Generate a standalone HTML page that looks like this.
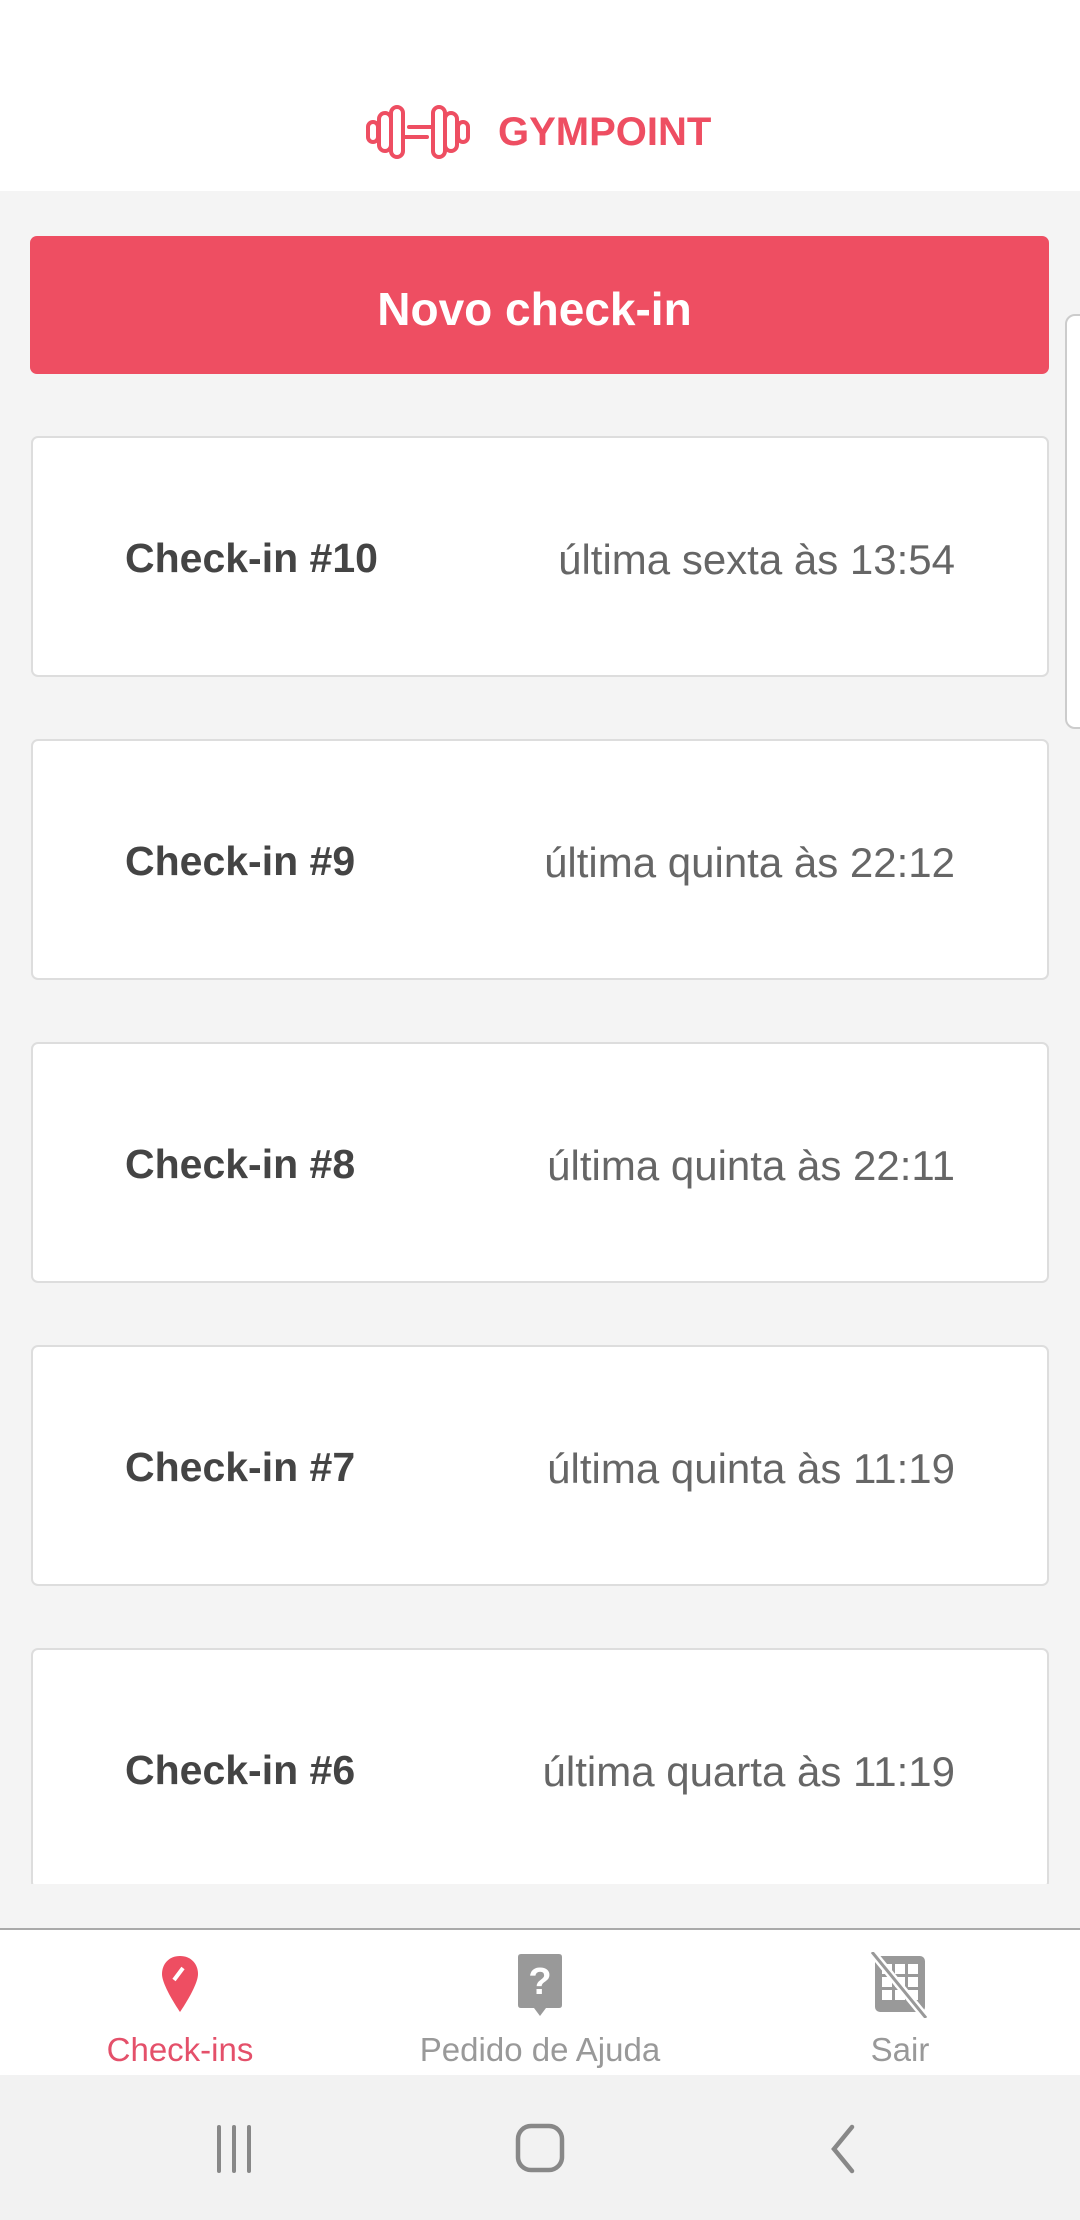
<!DOCTYPE html>
<html><head><meta charset="utf-8"><style>
*{margin:0;padding:0;box-sizing:border-box}
body{width:1080px;height:2220px;background:#f4f4f4;font-family:"Liberation Sans",Roboto,sans-serif;position:relative;overflow:hidden}
.hdr{position:absolute;left:0;top:0;width:1080px;height:191px;background:#fff}
.logo{position:absolute;left:498px;top:110px;font-size:40px;font-weight:bold;color:#ee4e62;letter-spacing:0}
.btn{position:absolute;left:30px;top:236px;width:1019px;height:138px;background:#ee4e62;border-radius:7px;color:#fff;font-size:46px;font-weight:bold;text-align:center;line-height:146px;text-indent:-10px}
.card{position:absolute;left:31px;width:1018px;height:241px;background:#fff;border:2px solid #ddd;border-radius:7px}
.card .t{position:absolute;left:92px;top:97px;font-size:41px;font-weight:bold;color:#444}
.card .d{position:absolute;right:92px;top:98px;font-size:42px;color:#666}
.clip{position:absolute;left:0;top:0;width:1080px;height:1884px;overflow:hidden}
.nav{position:absolute;left:0;top:1928px;width:1080px;height:147px;background:#fff;border-top:2px solid #aaa}
.lab{position:absolute;top:101px;font-size:33px;width:360px;text-align:center;color:#999}
.sys{position:absolute;left:0;top:2075px;width:1080px;height:145px;background:#f2f2f2}
</style></head><body>
<div class="hdr">
<svg style="position:absolute;left:365px;top:104px" width="106" height="56" viewBox="0 0 106 56" fill="none" stroke="#ee4e62" stroke-width="4" stroke-linecap="round">
<rect x="3" y="18" width="10" height="20" rx="5"/><rect x="14" y="9" width="12" height="38" rx="6"/><rect x="26" y="3" width="12" height="50" rx="6"/>
<rect x="68" y="3" width="12" height="50" rx="6"/><rect x="80" y="9" width="12" height="38" rx="6"/><rect x="93" y="18" width="10" height="20" rx="5"/>
<line x1="44" y1="23" x2="66" y2="23"/><line x1="40" y1="33" x2="62" y2="33"/></svg>
<div class="logo">GYMPOINT</div></div>
<div class="clip">
<div class="btn">Novo check-in</div>
<div class="card" style="top:436px"><div class="t">Check-in #10</div><div class="d">última sexta às 13:54</div></div>
<div class="card" style="top:739px"><div class="t">Check-in #9</div><div class="d">última quinta às 22:12</div></div>
<div class="card" style="top:1042px"><div class="t">Check-in #8</div><div class="d">última quinta às 22:11</div></div>
<div class="card" style="top:1345px"><div class="t">Check-in #7</div><div class="d">última quinta às 11:19</div></div>
<div class="card" style="top:1648px"><div class="t">Check-in #6</div><div class="d">última quarta às 11:19</div></div>
<div style="position:absolute;left:1065px;top:314px;width:30px;height:415px;border:2px solid #ccc;border-radius:10px;background:#fff"></div>
</div>
<div class="nav">
<svg style="position:absolute;left:160px;top:24px" width="40" height="60" viewBox="0 0 40 60"><path d="M20 2C9 2 2 10 2 20C2 32 20 58 20 58C20 58 38 32 38 20C38 10 31 2 20 2Z" fill="#ee4e62"/><path d="M14 26L23 14" stroke="#fff" stroke-width="4"/></svg>
<svg style="position:absolute;left:516px;top:22px" width="48" height="66" viewBox="0 0 48 66"><path d="M5 2H43Q46 2 46 5V53Q46 56 43 56H30L24 64L18 56H5Q2 56 2 53V5Q2 2 5 2Z" fill="#999"/><text x="24" y="42" font-size="38" font-weight="bold" fill="#fff" text-anchor="middle" font-family="Liberation Sans">?</text></svg>
<svg style="position:absolute;left:870px;top:22px" width="58" height="66" viewBox="0 0 58 66"><rect x="5" y="4" width="50" height="56" rx="5" fill="#999"/><g fill="#fff"><rect x="12" y="12" width="10" height="10"/><rect x="25" y="12" width="10" height="10"/><rect x="38" y="12" width="10" height="10"/><rect x="12" y="25" width="10" height="10"/><rect x="25" y="25" width="10" height="10"/><rect x="38" y="25" width="10" height="10"/><rect x="12" y="38" width="10" height="10"/><rect x="25" y="38" width="10" height="10"/><rect x="38" y="38" width="10" height="10"/></g><path d="M2 0L56 66" stroke="#fff" stroke-width="8"/><path d="M2 0L56 66" stroke="#999" stroke-width="3"/></svg>
<div class="lab" style="left:0;color:#e4506a">Check-ins</div>
<div class="lab" style="left:360px">Pedido de Ajuda</div>
<div class="lab" style="left:720px">Sair</div>
</div>
<div class="sys">
<svg style="position:absolute;left:210px;top:48px" width="50" height="52"><g stroke="#888" stroke-width="4" stroke-linecap="round"><line x1="9" y1="4" x2="9" y2="48"/><line x1="24" y1="4" x2="24" y2="48"/><line x1="39" y1="4" x2="39" y2="48"/></g></svg>
<svg style="position:absolute;left:515px;top:48px" width="52" height="52"><rect x="3" y="3" width="44" height="44" rx="13" fill="none" stroke="#888" stroke-width="4.5"/></svg>
<svg style="position:absolute;left:824px;top:48px" width="36" height="52"><path d="M28 4L10 26L28 48" fill="none" stroke="#888" stroke-width="4.5" stroke-linecap="round"/></svg>
</div>
</body></html>
